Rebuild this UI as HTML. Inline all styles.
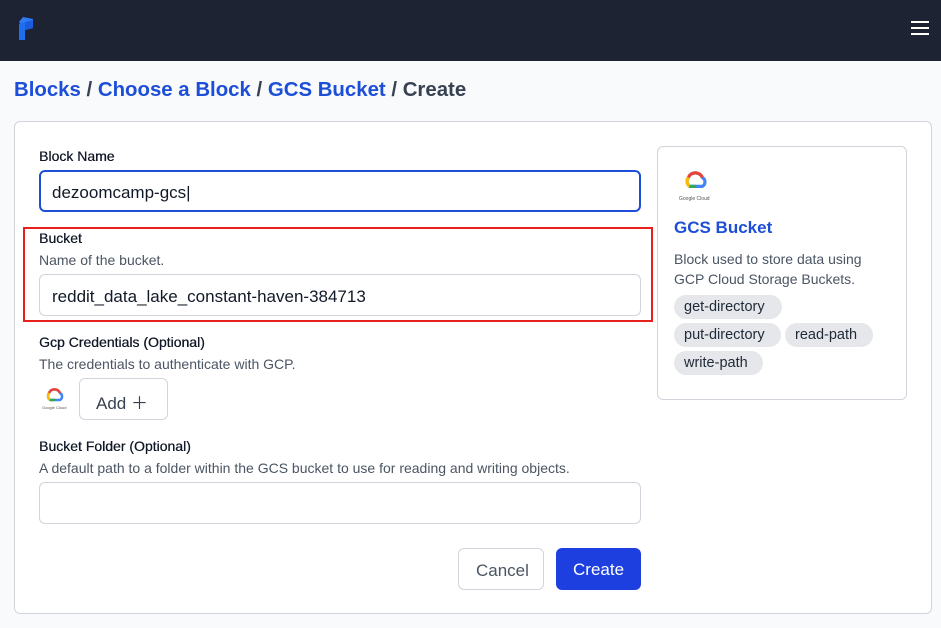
<!DOCTYPE html>
<html><head><style>
*{box-sizing:border-box;margin:0;padding:0}
body{width:941px;height:628px;background:#f9fafb;font-family:"Liberation Sans",sans-serif;position:relative;overflow:hidden;color:#1f2937}
.top{position:absolute;left:0;top:0;width:941px;height:61px;background:#1e2333}
.abs{position:absolute}
.lbl{font-size:14px;color:#111827;position:absolute;text-shadow:0.3px 0 0 #111827}
.sub{font-size:14px;color:#4b5563;position:absolute}
.inp{position:absolute;left:39px;width:602px;height:42px;border:1px solid #d1d5db;border-radius:6px;background:#fff;font-size:17px;padding:12px 12px;color:#111827}
.tag{position:absolute;height:24px;background:#e5e7eb;border-radius:12px;font-size:14.5px;line-height:24px;padding:0 10px;color:#1f2937}
</style></head><body>
<div class="top">
<svg class="abs" style="left:17px;top:16px" width="20" height="26" viewBox="0 0 20 26"><path d="M2 6 L6 1 L16 3 L16 12 L8 14 Z" fill="#2f7bf5"/><path d="M2 8 L8 6 L8 24 L2 24 Z" fill="#1e6ff0"/><path d="M8 6 L16 4 L16 12 L8 14Z" fill="#1a5ce0"/></svg>
<div class="abs" style="left:911px;top:21px;width:18px;height:2px;background:#fff;box-shadow:0 6px 0 #fff,0 12px 0 #fff"></div>
</div>
<div class="abs" style="left:14px;top:79px;font-size:20.4px;font-weight:bold;color:#374151"><span style="color:#1d4ed8">Blocks</span> / <span style="color:#1d4ed8">Choose a Block</span> / <span style="color:#1d4ed8">GCS Bucket</span> / Create</div>
<div class="abs" style="left:14px;top:121px;width:918px;height:493px;background:#fff;border:1px solid #d1d5db;border-radius:6px"></div>
<div class="lbl" style="left:39px;top:148px">Block Name</div>
<div class="inp" style="top:170px;border:2px solid #1d4ed8;padding:11px 11px">dezoomcamp-gcs|</div>
<div class="abs" style="left:23px;top:227px;width:630px;height:95px;border:2px solid #e8201c"></div>
<div class="lbl" style="left:39px;top:230px">Bucket</div>
<div class="sub" style="left:39px;top:252px">Name of the bucket.</div>
<div class="inp" style="top:274px">reddit_data_lake_constant-haven-384713</div>
<div class="lbl" style="left:39px;top:334px">Gcp Credentials (Optional)</div>
<div class="sub" style="left:39px;top:356px">The credentials to authenticate with GCP.</div>
<svg class="abs" style="left:44px;top:388px" width="22" height="14" viewBox="0 0 22 14"><path d="M6 12 A5 5 0 0 1 5 5 A6 6 0 0 1 16 5 A4 4 0 0 1 16 12Z" fill="none" stroke="#4285f4" stroke-width="2.5"/><path d="M5 5 A6 6 0 0 1 16 5" fill="none" stroke="#ea4335" stroke-width="2.5"/><path d="M6 12 A5 5 0 0 1 5 5" fill="none" stroke="#fbbc05" stroke-width="2.5"/><path d="M6 12 H11" stroke="#34a853" stroke-width="2.5"/></svg>
<div class="abs" style="left:42px;top:405px;font-size:4px;color:#555">Google Cloud</div>
<div class="abs" style="left:79px;top:378px;width:89px;height:42px;border:1px solid #d1d5db;border-radius:6px;font-size:17px;color:#374151;padding:10px 16px">Add ＋</div>
<div class="lbl" style="left:39px;top:438px">Bucket Folder (Optional)</div>
<div class="sub" style="left:39px;top:460px">A default path to a folder within the GCS bucket to use for reading and writing objects.</div>
<div class="inp" style="top:482px"></div>
<div class="abs" style="left:458px;top:548px;width:86px;height:42px;border:1px solid #d1d5db;border-radius:6px;font-size:17px;color:#4b5563;padding:12px 17px">Cancel</div>
<div class="abs" style="left:556px;top:548px;width:85px;height:42px;background:#1d3fe0;border-radius:6px;font-size:17px;color:#fff;padding:12px 17px">Create</div>
<div class="abs" style="left:657px;top:146px;width:250px;height:254px;border:1px solid #d1d5db;border-radius:6px;background:#fff"></div>
<svg class="abs" style="left:682px;top:170px" width="28" height="20" viewBox="0 0 22 14"><path d="M6 12 A5 5 0 0 1 5 5 A6 6 0 0 1 16 5 A4 4 0 0 1 16 12Z" fill="none" stroke="#4285f4" stroke-width="2.5"/><path d="M5 5 A6 6 0 0 1 16 5" fill="none" stroke="#ea4335" stroke-width="2.5"/><path d="M6 12 A5 5 0 0 1 5 5" fill="none" stroke="#fbbc05" stroke-width="2.5"/><path d="M6 12 H11" stroke="#34a853" stroke-width="2.5"/></svg>
<div class="abs" style="left:679px;top:196px;font-size:5px;color:#555">Google Cloud</div>
<div class="abs" style="left:674px;top:218px;font-size:17px;font-weight:bold;color:#1d4ed8">GCS Bucket</div>
<div class="sub" style="left:674px;top:249px;line-height:20px">Block used to store data using<br>GCP Cloud Storage Buckets.</div>
<div class="tag" style="left:674px;top:295px;width:108px">get-directory</div>
<div class="tag" style="left:674px;top:323px;width:107px">put-directory</div>
<div class="tag" style="left:785px;top:323px;width:88px">read-path</div>
<div class="tag" style="left:674px;top:351px;width:89px">write-path</div>
</body></html>
